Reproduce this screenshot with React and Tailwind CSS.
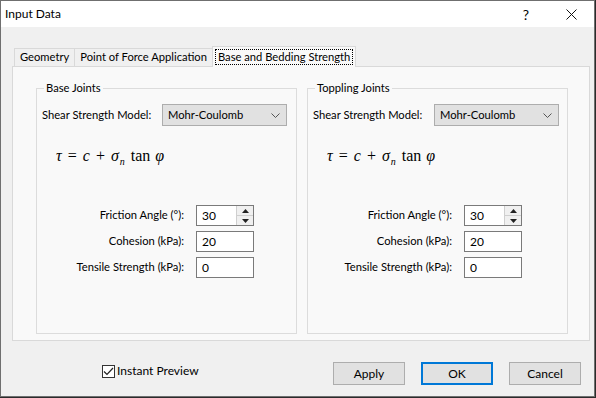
import React from 'react';

const ui = { fontFamily: 'Lato, "Liberation Sans", sans-serif' };

const Tab = ({ label, active }) =>
  active ? (
    <div className="relative z-10 -mb-px flex h-[21px] items-center border border-b-0 border-[#d9d9d9] bg-[#f9f9f9] px-[2px]">
      <span className="border border-dotted border-black px-[2px] leading-[14px]">{label}</span>
    </div>
  ) : (
    <div className="flex h-[18px] items-center border border-b-0 border-r-0 border-[#d9d9d9] bg-[#f0f0f0] px-[5px] last:border-r">
      {label}
    </div>
  );

const Spinner = () => (
  <div className="flex h-full w-[17px] flex-col border-l border-[#cfcfcf] bg-[#f0f0f0]">
    <div className="flex flex-1 items-center justify-center border-b border-[#cfcfcf]">
      <svg width="7" height="4" viewBox="0 0 7 4"><path d="M0 4 L3.5 0 L7 4 Z" fill="#222" /></svg>
    </div>
    <div className="flex flex-1 items-center justify-center">
      <svg width="7" height="4" viewBox="0 0 7 4"><path d="M0 0 L3.5 4 L7 0 Z" fill="#222" /></svg>
    </div>
  </div>
);

const Field = ({ label, value, spin, inputX }) => (
  <div className="flex h-[21px] items-center">
    <div className="pr-[12px] text-right" style={{ width: inputX }}>{label}</div>
    <div className="flex h-[21px] w-[58px] items-center border border-[#7a7a7a] bg-white">
      <div className="flex-1 pl-[5px] text-[12px]">{value}</div>
      {spin && <Spinner />}
    </div>
  </div>
);

const Formula = () => (
  <div className="flex items-baseline text-[16px]" style={{ fontFamily: '"Liberation Serif", serif' }}>
    <span className="italic">τ</span>
    <span className="px-[6px]">=</span>
    <span className="italic">c</span>
    <span className="px-[6px]">+</span>
    <span className="italic">σ</span>
    <span className="relative top-[4px] ml-[1px] text-[10px] italic">n</span>
    <span className="ml-[6px]">tan</span>
    <span className="ml-[5px] italic">φ</span>
  </div>
);

const Group = ({ title, selectX, inputX }) => (
  <fieldset className="h-[253px] w-[261px] border border-[#dcdcdc] px-[5px]">
    <legend className="ml-[2px] px-[2px] leading-[14px]">{title}</legend>
    <div className="mt-[9px] flex h-[22px] items-center">
      <div className="whitespace-nowrap" style={{ width: selectX - 6 }}>Shear Strength Model:</div>
      <div className="flex h-[22px] w-[125px] items-center justify-between border border-[#adadad] bg-[#e1e1e1] pl-[5px] pr-[6px]">
        <span>Mohr-Coulomb</span>
        <svg width="9" height="5" viewBox="0 0 9 5"><path d="M0.5 0.5 L4.5 4.5 L8.5 0.5" fill="none" stroke="#555" strokeWidth="1" /></svg>
      </div>
    </div>
    <div className="ml-[14px] mt-[18px] h-[61px]">
      <Formula />
    </div>
    <div className="flex flex-col gap-[5px]">
      <Field label="Friction Angle (°):" value="30" spin inputX={inputX - 6} />
      <Field label="Cohesion (kPa):" value="20" inputX={inputX - 6} />
      <Field label="Tensile Strength (kPa):" value="0" inputX={inputX - 6} />
    </div>
  </fieldset>
);

const Button = ({ label, primary }) => (
  <div
    className={`flex h-[23px] w-[72px] items-center justify-center bg-[#e1e1e1] ${
      primary ? 'border-2 border-[#0078d7]' : 'border border-[#adadad]'
    }`}
  >
    {label}
  </div>
);

export default function App() {
  return (
    <div className="h-[398px] w-[596px] bg-[#2b2b2b]" style={ui}>
      <div className="flex h-[397px] w-[595px] flex-col border border-[#6f6f6f] bg-[#f0f0f0] text-[11.2px] text-black">
        <div className="flex h-[26px] items-center bg-white pl-[4px] text-[12px]">
          <span className="flex-1">Input Data</span>
          <span className="w-[46px] pl-[2px] text-center text-[14px]">?</span>
          <div className="flex w-[46px] justify-center">
            <svg width="11" height="11" viewBox="0 0 11 11">
              <path d="M0.5 0.5 L10.5 10.5 M10.5 0.5 L0.5 10.5" stroke="#111" strokeWidth="1" />
            </svg>
          </div>
        </div>

        <div className="ml-[11px] mt-[19px] w-[578px]">
          <div className="ml-[2px] flex items-end">
            <Tab label="Geometry" />
            <Tab label="Point of Force Application" />
            <Tab label="Base and Bedding Strength" active />
          </div>
          <div className="flex h-[275px] gap-[10px] border border-[#d9d9d9] bg-[#f9f9f9] pl-[23px] pt-[14px]">
            <Group title="Base Joints" selectX={126} inputX={160} />
            <Group title="Toppling Joints" selectX={127} inputX={157} />
          </div>
        </div>

        <div className="mt-[21px] flex items-center">
          <div className="ml-[101px] flex w-[231px] items-center self-start">
            <div className="flex h-[13px] w-[13px] items-center justify-center border border-[#333] bg-white">
              <svg width="11" height="9" viewBox="0 0 11 9"><path d="M1 4.5 L4 7.5 L10 1" fill="none" stroke="#222" strokeWidth="1.2" /></svg>
            </div>
            <span className="ml-[2px] text-[12px]">Instant Preview</span>
          </div>
          <div className="flex gap-[16px] text-[12px]">
            <Button label="Apply" />
            <Button label="OK" primary />
            <Button label="Cancel" />
          </div>
        </div>
      </div>
    </div>
  );
}
